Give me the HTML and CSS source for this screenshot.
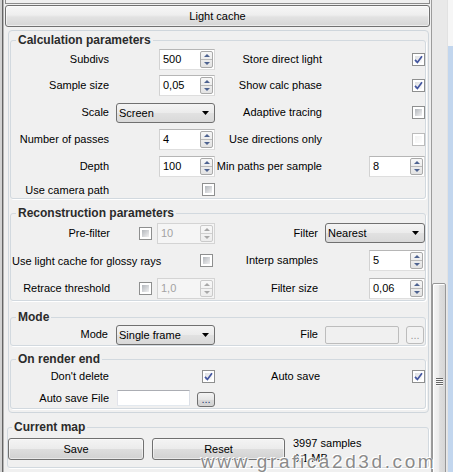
FILE: index.html
```html
<!DOCTYPE html>
<html>
<head>
<meta charset="utf-8">
<title>Light cache</title>
<link rel="stylesheet" href="styles.css">
</head>
<body>
<div class="screen">
  <div class="edge"></div>
  <div class="main">
    <div class="prev"></div>
    <div class="rollout-title">Light cache</div>
    <div class="panel">
      <section class="group g-calc">
        <div class="gtitle">Calculation parameters</div>
        <div class="grid">
          <span class="lbl">Subdivs</span>
          <span class="ctl"><span class="spin"><span class="val">500</span><span class="arrows"><i class="up"></i><i class="dn"></i></span></span></span>
          <span class="lbl">Store direct light</span>
          <span class="ctl"><span class="cb on"><svg viewBox="0 0 9 9"><path d="M1 4.8 L3.4 7.4 L8 1.2"/></svg></span></span>

          <span class="lbl">Sample size</span>
          <span class="ctl"><span class="spin"><span class="val">0,05</span><span class="arrows"><i class="up"></i><i class="dn"></i></span></span></span>
          <span class="lbl">Show calc phase</span>
          <span class="ctl"><span class="cb on"><svg viewBox="0 0 9 9"><path d="M1 4.8 L3.4 7.4 L8 1.2"/></svg></span></span>

          <span class="lbl">Scale</span>
          <span class="ctl"><span class="combo w99"><span>Screen</span><svg class="caret" viewBox="0 0 7 4"><path d="M0 0H7L3.5 4Z"/></svg></span></span>
          <span class="lbl">Adaptive tracing</span>
          <span class="ctl"><span class="cb"></span></span>

          <span class="lbl">Number of passes</span>
          <span class="ctl"><span class="spin"><span class="val">4</span><span class="arrows"><i class="up"></i><i class="dn"></i></span></span></span>
          <span class="lbl">Use directions only</span>
          <span class="ctl"><span class="cb dis"></span></span>

          <span class="lbl">Depth</span>
          <span class="ctl"><span class="spin"><span class="val">100</span><span class="arrows"><i class="up"></i><i class="dn"></i></span></span></span>
          <span class="lbl">Min paths per sample</span>
          <span class="ctl"><span class="spin"><span class="val">8</span><span class="arrows"><i class="up"></i><i class="dn"></i></span></span></span>

          <span class="lbl">Use camera path</span>
          <span class="ctl top"><span class="cb"></span></span>
          <span></span>
          <span></span>
        </div>
      </section>

      <section class="group g-rec">
        <div class="gtitle">Reconstruction parameters</div>
        <div class="grid">
          <span class="lbl">Pre-filter</span>
          <span class="ctl g5"><span class="cb"></span><span class="spin dis w58"><span class="val">10</span><span class="arrows"><i class="up"></i><i class="dn"></i></span></span></span>
          <span class="lbl">Filter</span>
          <span class="ctl"><span class="combo w100"><span>Nearest</span><svg class="caret" viewBox="0 0 7 4"><path d="M0 0H7L3.5 4Z"/></svg></span></span>

          <span class="span2"><span class="lbl-l">Use light cache for glossy rays</span><span class="cb"></span></span>
          <span class="lbl">Interp samples</span>
          <span class="ctl"><span class="spin"><span class="val">5</span><span class="arrows"><i class="up"></i><i class="dn"></i></span></span></span>

          <span class="lbl">Retrace threshold</span>
          <span class="ctl g5"><span class="cb"></span><span class="spin dis w58"><span class="val">1,0</span><span class="arrows"><i class="up"></i><i class="dn"></i></span></span></span>
          <span class="lbl">Filter size</span>
          <span class="ctl"><span class="spin"><span class="val">0,06</span><span class="arrows"><i class="up"></i><i class="dn"></i></span></span></span>
        </div>
      </section>

      <section class="group g-mode">
        <div class="gtitle">Mode</div>
        <div class="grid">
          <span class="lbl">Mode</span>
          <span class="ctl"><span class="combo w99"><span>Single frame</span><svg class="caret" viewBox="0 0 7 4"><path d="M0 0H7L3.5 4Z"/></svg></span></span>
          <span class="lbl">File</span>
          <span class="ctl g7 mr1"><span class="tb dis"></span><span class="dots dis">...</span></span>
        </div>
      </section>

      <section class="group g-end">
        <div class="gtitle">On render end</div>
        <div class="grid">
          <span class="lbl">Don't delete</span>
          <span class="ctl"><span class="cb on"><svg viewBox="0 0 9 9"><path d="M1 4.8 L3.4 7.4 L8 1.2"/></svg></span></span>
          <span class="lbl">Auto save</span>
          <span class="ctl"><span class="cb on"><svg viewBox="0 0 9 9"><path d="M1 4.8 L3.4 7.4 L8 1.2"/></svg></span></span>

          <span class="lbl">Auto save File</span>
          <span class="ctl g7"><span class="tb"></span><span class="dots">...</span></span>
          <span></span>
          <span></span>
        </div>
      </section>
    </div>

    <section class="group g-map">
      <div class="gtitle">Current map</div>
      <div class="map-row">
        <span class="btn save">Save</span>
        <span class="btn reset">Reset</span>
        <span class="info">3997 samples<br>3,1 MB</span>
      </div>
    </section>
  </div>
  <div class="scroll">
    <div class="thumb"><div class="grip"></div></div>
  </div>
  <div class="desk"></div>
  <div class="watermark">www.grafica2d3d.com</div>
</div>
</body>
</html>
```

FILE: styles.css
```css
* { box-sizing: border-box; }
html, body { margin: 0; padding: 0; }
body {
  background: #f0f0f0;
  font-family: "Liberation Sans", Arial, sans-serif;
  font-size: 11px;
  color: #000;
}
.screen {
  display: flex;
  width: 453px;
  height: 472px;
  overflow: hidden;
  position: relative;
  background: #f0f0f0;
}
.edge {
  flex: none;
  width: 5px;
  background: linear-gradient(to right, #d2d2d2 0, #d2d2d2 2px, #646464 2px, #646464 3px, #b4b4b4 3px, #b4b4b4 4px, #f0f0f0 4px);
}
.main {
  flex: none;
  width: 426px;
  display: flex;
  flex-direction: column;
}
.prev {
  flex: none;
  height: 4px;
  width: 425px;
  border: 1px solid #8c8c8c;
  border-top: none;
}
.rollout-title {
  flex: none;
  margin-top: 1px;
  width: 425px;
  height: 22px;
  border: 1px solid #707070;
  border-radius: 3px;
  background: linear-gradient(#f7f7f7, #eeeeee 45%, #e2e2e2 55%, #d6d6d6);
  box-shadow: inset 0 0 0 1px rgba(255,255,255,0.55);
  text-align: center;
  line-height: 20px;
}
.panel {
  flex: none;
  margin: 3px 0 0 3px;
  width: 421px;
  border: 1px solid #cfd6dc;
  border-radius: 4px;
  padding: 0 2px 3px 1px;
}
.group {
  border: 1px solid #d2d9df;
  border-radius: 3px;
  box-shadow: 1px 1px 0 #ffffff;
}
.gtitle {
  width: max-content;
  margin: -8px 0 0 5px;
  padding: 0 2px;
  background: #f0f0f0;
  font-weight: bold;
  font-size: 12px;
  line-height: 14px;
  color: #2b2b2b;
}
.grid { display: grid; }

.g-calc { margin-top: 9px; }
.g-calc .grid {
  margin-top: 2px;
  grid-template-columns: 98px 106px 107px 103px;
  grid-template-rows: repeat(5, 20px) 15px;
  row-gap: 6.8px;
}
.g-rec { margin-top: 14px; }
.g-rec .grid {
  margin-top: 3px;
  padding-bottom: 1px;
  grid-template-columns: 99px 105px 103px 107px;
  grid-auto-rows: 21px;
  row-gap: 6.5px;
}
.g-mode { margin-top: 16px; }
.g-mode .grid {
  margin-top: 1px;
  grid-template-columns: 97px 107px 103px 107px;
  grid-auto-rows: 20px;
}
.g-end { margin-top: 13px; }
.g-end .grid {
  margin-top: 2px;
  padding-bottom: 1px;
  grid-template-columns: 98px 106px 105px 105px;
  grid-auto-rows: 17px;
  row-gap: 5px;
}

.lbl {
  align-self: center;
  text-align: right;
  white-space: nowrap;
  line-height: 13px;
}
.ctl {
  display: flex;
  justify-content: flex-end;
  align-items: center;
}
.ctl.top { align-items: flex-start; }
.ctl.g5 { gap: 5px; }
.ctl.g7 { gap: 7px; }
.ctl.mr1 { padding-right: 1px; }
.span2 {
  grid-column: span 2;
  display: flex;
  justify-content: space-between;
  align-items: center;
  padding: 0 2px 0 1px;
  white-space: nowrap;
}

/* checkbox */
.cb {
  flex: none;
  display: block;
  width: 13px;
  height: 13px;
  border: 1px solid #8e8f8f;
  padding: 2px;
  background: linear-gradient(135deg, #b3b7bc, #f1f1f2) content-box, #ffffff;
}
.cb.on {
  background: linear-gradient(135deg, #dcdee2, #fbfbfb) content-box, #ffffff;
}
.cb.dis {
  border-color: #bcbcbc;
  background: linear-gradient(135deg, #f2f2f2, #fdfdfd) content-box, #ffffff;
}
.cb svg {
  display: block;
  width: 9px;
  height: 9px;
  margin: -1px;
  overflow: visible;
}
.cb svg path {
  fill: none;
  stroke: #4356a0;
  stroke-width: 1.7;
  stroke-linecap: butt;
  stroke-linejoin: miter;
}

/* spinner */
.spin {
  flex: none;
  display: flex;
  width: 56px;
  height: 21px;
  background: #ffffff;
  border: 1px solid;
  border-color: #b6b6b6 #d8d8d8 #dedede #d2d2d2;
}
.spin.w58 { width: 58px; }
.spin .val {
  flex: 1;
  padding-left: 3px;
  line-height: 19px;
}
.arrows {
  width: 13px;
  margin: 1px 1px 1px 0;
  border: 1px solid #a9a9a9;
  border-radius: 2px;
  display: flex;
  flex-direction: column;
  background: linear-gradient(#f7f7f7, #e3e3e3);
}
.arrows i {
  flex: 1;
  display: flex;
  align-items: center;
  justify-content: center;
}
.arrows i + i { border-top: 1px solid #b9b9b9; }
.arrows .up::before {
  content: "";
  border-left: 3px solid transparent;
  border-right: 3px solid transparent;
  border-bottom: 3px solid #4e6390;
}
.arrows .dn::before {
  content: "";
  border-left: 3px solid transparent;
  border-right: 3px solid transparent;
  border-top: 3px solid #4e6390;
}
.spin.dis {
  background: #f5f5f5;
  border-color: #d4d4d4;
  color: #a3a3a3;
}
.spin.dis .arrows { border-color: #cacaca; background: linear-gradient(#f8f8f8, #ededed); }
.spin.dis .arrows .up::before { border-bottom-color: #a8a8a8; }
.spin.dis .arrows .dn::before { border-top-color: #a8a8a8; }
.spin.dis .arrows i + i { border-top-color: #d0d0d0; }

/* combo */
.combo {
  flex: none;
  display: flex;
  align-items: center;
  justify-content: space-between;
  height: 20px;
  border: 1px solid #707070;
  border-radius: 3px;
  background: linear-gradient(#f4f4f4, #ebebeb 50%, #e1e1e1 52%, #d9d9d9);
  padding: 0 5px 0 2px;
  white-space: nowrap;
}
.combo.w99 { width: 99px; }
.combo.w100 { width: 100px; }
.caret { width: 7px; height: 4px; display: block; }
.caret path { fill: #000; }

/* text boxes / small buttons */
.tb {
  flex: none;
  display: block;
  width: 73px;
  height: 16px;
  background: #ffffff;
  border: 1px solid;
  border-color: #abadb3 #dbdfe6 #e3e9ef #e2e3ea;
  align-self: flex-start;
}
.tb.dis {
  width: 74px;
  height: 18px;
  background: #f0f0f0;
  border-color: #bdbdbd;
  border-radius: 2px;
  align-self: center;
}
.dots {
  flex: none;
  display: flex;
  align-items: flex-end;
  justify-content: center;
  width: 18px;
  height: 15px;
  border: 1px solid #707070;
  border-radius: 3px;
  background: linear-gradient(#f4f4f4, #e6e6e6 50%, #dadada 52%, #d2d2d2);
  color: #1d3b72;
  font-size: 11px;
  line-height: 11px;
  padding-bottom: 1px;
  align-self: flex-end;
}
.dots.dis {
  height: 18px;
  border-color: #bcbcbc;
  background: #f2f2f2;
  color: #9a9a9a;
  align-self: center;
  padding-bottom: 2px;
}

/* current map */
.g-map {
  flex: none;
  margin: 14px 0 0 2px;
  width: 422px;
  padding-bottom: 1px;
}
.g-map .gtitle { margin-left: 4px; }
.map-row {
  display: flex;
  align-items: flex-start;
  gap: 8px;
  margin-top: 2px;
}
.btn {
  flex: none;
  margin-top: 2px;
  height: 22px;
  border: 1px solid #707070;
  border-radius: 3px;
  background: linear-gradient(#f4f4f4, #ebebeb 50%, #dddddd 52%, #d1d1d1);
  box-shadow: inset 0 0 0 1px rgba(255,255,255,0.5);
  text-align: center;
  line-height: 20px;
}
.btn.save { width: 136px; }
.btn.reset { width: 133px; }
.info { line-height: 15px; white-space: nowrap; }

/* scrollbar */
.scroll {
  flex: none;
  width: 16px;
  display: flex;
  flex-direction: column;
  background: #e9e9e9;
  border-left: 1px solid #9c9c9c;
}
.thumb {
  flex: none;
  margin-top: 283px;
  width: 14px;
  height: 200px;
  border: 1px solid #979797;
  border-radius: 2px;
  background: linear-gradient(to right, #f6f6f6, #ebebeb 50%, #dedede 55%, #d6d6d6);
  box-shadow: inset 1px 1px 0 #ffffff;
}
.grip {
  width: 7px;
  height: 8px;
  margin: 94px auto 0;
  background: repeating-linear-gradient(#666666 0, #666666 1px, #f8f8f8 1px, #f8f8f8 2px);
}
.desk {
  flex: none;
  width: 6px;
  background: linear-gradient(#f6f6f6 0, #f6f6f6 46px, #c2d6ee 46px);
  border-left: 1px solid #e2e2e2;
}

.watermark {
  position: absolute;
  left: 201px;
  top: 452px;
  font-family: "Liberation Sans", Arial, sans-serif;
  font-size: 19px;
  line-height: 19px;
  letter-spacing: 2.6px;
  color: #8a8a8a;
  text-shadow: 0 0 1px #ffffff, 1px 1px 0 #ffffff, -1px -1px 0 #ffffff;
  white-space: nowrap;
}
```
